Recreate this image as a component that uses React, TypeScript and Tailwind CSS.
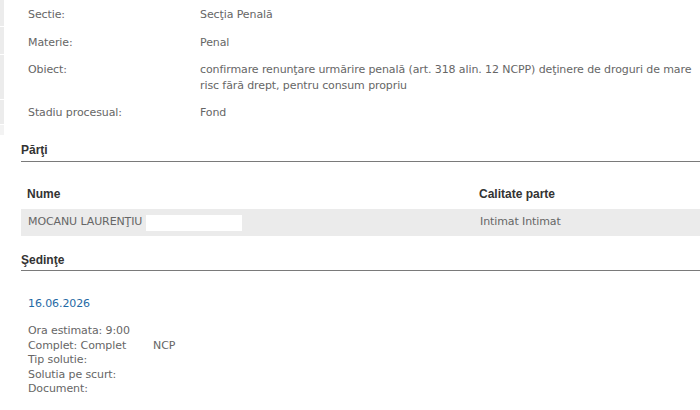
import React from 'react';

const INFO = [
  { label: 'Sectie:', value: 'Secţia Penală', cls: 'pt-[6px] pb-[6px]' },
  { label: 'Materie:', value: 'Penal', cls: 'pt-[6px] pb-[6px]' },
  {
    label: 'Obiect:',
    value:
      'confirmare renunţare urmărire penală (art. 318 alin. 12 NCPP) deţinere de droguri de mare risc fără drept, pentru consum propriu',
    cls: 'pt-[5px] pb-[5px]',
  },
  { label: 'Stadiu procesual:', value: 'Fond', cls: 'pt-[6px] pb-[6px]' },
];

const DETAILS: [string, string?][] = [
  ['Ora estimata: 9:00'],
  ['Complet: Complet', 'NCP'],
  ['Tip solutie:'],
  ['Solutia pe scurt:'],
  ['Document:'],
];

const body = { fontFamily: '"DejaVu Sans", Verdana, sans-serif' };
const head = { fontFamily: '"Liberation Sans", Arial, sans-serif' };

const SectionTitle = ({ children, pb }: { children: React.ReactNode; pb: string }) => (
  <div className={`ml-[21px] border-b border-[#7a7a7a] ${pb} text-[12px] font-bold leading-[16px] tracking-normal text-[#333]`} style={head}>
    {children}
  </div>
);

export default function App() {
  return (
    <div className="w-[700px] h-[410px] overflow-hidden bg-white text-[11px] text-[#666] tracking-[-0.1px]" style={body}>
      {/* dosar info */}
      <div className="flex">
        <div className="w-[4px] flex flex-col gap-[1px]">
          <div className="h-[26px] bg-[#ececec]" />
          <div className="h-[27px] bg-[#ececec]" />
          <div className="h-[44px] bg-[#ececec]" />
          <div className="h-[24px] bg-[#ececec]" />
          <div className="h-[10px] bg-[#f3f3f3]" />
        </div>
        <div className="flex-1 pt-[1px]">
          {INFO.map((r) => (
            <div key={r.label} className={`flex leading-[16px] ${r.cls}`}>
              <div className="w-[196px] pl-[24px] shrink-0">{r.label}</div>
              <div className="w-[494px]">{r.value}</div>
            </div>
          ))}
        </div>
      </div>

      {/* parti */}
      <div className="mt-[7px]">
        <SectionTitle pb="pb-[3px]">Părţi</SectionTitle>
        <div className="ml-[21px] mt-[24px]">
          <div className="flex text-[12px] font-bold leading-[16px] tracking-normal text-[#333]" style={head}>
            <div className="w-[458px] pl-[6px]">Nume</div>
            <div>Calitate parte</div>
          </div>
          <div className="mt-[7px] flex h-[27px] items-center bg-[#ebebeb]">
            <div className="w-[458px] pl-[7px] flex items-center">
              <span>MOCANU LAURENŢIU</span>
              <span className="ml-[4px] inline-block h-[16px] w-[96px] bg-white" />
            </div>
            <div className="pl-[1px]">Intimat Intimat</div>
          </div>
        </div>
      </div>

      {/* sedinte */}
      <div className="mt-[16px]">
        <SectionTitle pb="pb-[2px]">Şedinţe</SectionTitle>
        <div className="ml-[28px] mt-[25px] leading-[16px] text-[#1f6aa5]">16.06.2026</div>
        <div className="ml-[28px] mt-[12px] leading-[14.6px]">
          {DETAILS.map(([a, b]) => (
            <div key={a} className="flex">
              <span className="w-[125px]">{a}</span>
              {b && <span>{b}</span>}
            </div>
          ))}
        </div>
      </div>
    </div>
  );
}
